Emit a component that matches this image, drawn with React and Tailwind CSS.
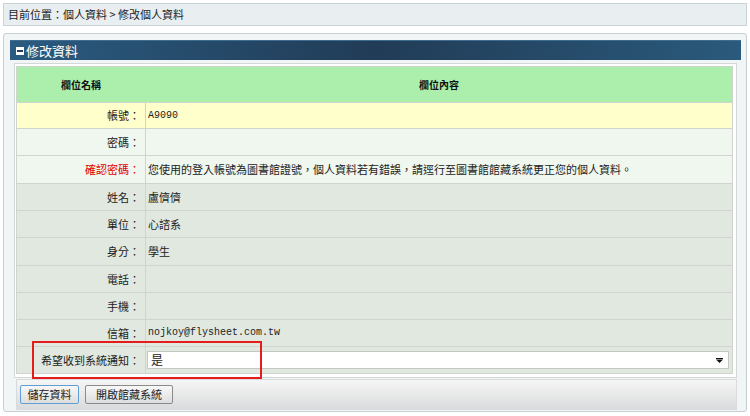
import React from "react";

const rows = [
  { label: "帳號：", value: "A9090", mono: true, h: "h-[26px]", bg: "bg-[#ffffcc]" },
  { label: "密碼：", value: "", h: "h-[27px]", bg: "bg-[#eff7ef]" },
  {
    label: "確認密碼：",
    value: "您使用的登入帳號為圖書館證號，個人資料若有錯誤，請逕行至圖書館館藏系統更正您的個人資料。",
    red: true,
    h: "h-[28px]",
    bg: "bg-[#eff7ef]",
  },
  { label: "姓名：", value: "盧儕儕", h: "h-[27px]", bg: "bg-[#e0e8e0]" },
  { label: "單位：", value: "心諮系", h: "h-[27px]", bg: "bg-[#e0e8e0]" },
  { label: "身分：", value: "學生", h: "h-[28px]", bg: "bg-[#e0e8e0]" },
  { label: "電話：", value: "", h: "h-[27px]", bg: "bg-[#e0e8e0]" },
  { label: "手機：", value: "", h: "h-[27px]", bg: "bg-[#e0e8e0]" },
  { label: "信箱：", value: "nojkoy@flysheet.com.tw", mono: true, h: "h-[27px]", bg: "bg-[#e0e8e0]" },
];

const cjk = "font-['Noto_Sans_CJK_TC','Noto_Sans',sans-serif]";

const App = () => {
  return (
    <div className={`w-[750px] h-[416px] bg-white relative overflow-hidden text-[#222] ${cjk}`}>

      {/* BREADCRUMB */}
      <div className="mx-[3px] mt-[3px] h-[23px] border border-[#c9d3d8] bg-[#e9eef1] flex items-center pl-[4px] text-[11px] leading-none">
        目前位置：個人資料 &gt; 修改個人資料
      </div>

      {/* PANEL */}
      <div className="ml-[3px] mr-[3px] mt-[7px] h-[379px] border border-[#c6cfd4] rounded-[3px] bg-[#f2f5f6] pl-[6px] pr-[5px] pt-[6px]">

        {/* TITLE BAR */}
        <div className="h-[20px] flex items-center pl-[6px] gap-[2px] bg-gradient-to-r from-[#2a5b80] via-[#213c57] to-[#2a5a7c] border-t border-[#3f6d90]">
          <svg width="8" height="8" viewBox="0 0 8 8">
            <rect x="0" y="0" width="8" height="8" fill="#ffffff" />
            <rect x="1" y="3" width="6" height="2" fill="#23415d" />
          </svg>
          <span className="text-white text-[13px] leading-none">修改資料</span>
        </div>

        {/* FORM BOX */}
        <div className="mt-[3px] mx-[4px] bg-white border border-[#d4d8d9] pl-[1px] pr-[3px] pt-[2px] pb-[3px]">
          <div className="border border-[#cfd4cf] text-[11px] leading-none">

            {/* HEADER ROW */}
            <div className="flex h-[36px] bg-[#acefac] border-b border-[#cfd4cf]">
              <div className="w-[129px] border-r border-[#cfd4cf] flex items-center justify-center font-bold text-[10px] text-[#111]">
                欄位名稱
              </div>
              <div className="flex-1 flex items-center justify-center font-bold text-[10px] text-[#111]">
                欄位內容
              </div>
            </div>

            {rows.map((row) => (
              <div key={row.label} className={`flex ${row.h} ${row.bg} border-b border-[#cfd4cf]`}>
                <div
                  className={`w-[129px] shrink-0 border-r border-[#cfd4cf] flex items-center justify-end pr-[5px] ${
                    row.red ? "text-[#e00000]" : ""
                  }`}
                >
                  {row.label}
                </div>
                <div
                  className={`flex-1 flex items-center pl-[2px] ${
                    row.mono ? "font-['Liberation_Mono',monospace] text-[10px]" : ""
                  }`}
                >
                  {row.value}
                </div>
              </div>
            ))}

            {/* NOTIFY ROW */}
            <div className="flex h-[26px] bg-[#e0e8e0]">
              <div className="w-[129px] shrink-0 border-r border-[#cfd4cf] flex items-center justify-end pr-[5px]">
                希望收到系統通知：
              </div>
              <div className="flex-1 flex items-center pl-[1px] pr-[3px]">
                <div className="w-full h-[18px] bg-white border border-[#c4c8c4] flex items-center justify-between pl-[3px] pr-[5px] text-[12px]">
                  <span>是</span>
                  <svg width="7" height="5" viewBox="0 0 7 5">
                    <rect x="0" y="0" width="7" height="1" fill="#111" />
                    <path d="M0 1.5 H7 L3.5 5 Z" fill="#111" />
                  </svg>
                </div>
              </div>
            </div>
          </div>
        </div>

        {/* BUTTON BAR */}
        <div className="mt-[1px] ml-[6px] mr-[4px] h-[31px] bg-gradient-to-b from-[#f6f6f6] to-[#d9dbdc] border border-[#d8dadb] flex items-center gap-[6px] pl-[3px]">
          <button className="w-[59px] h-[19px] rounded-[2px] border border-[#5f9fd6] bg-gradient-to-b from-[#f8f8f8] to-[#dedede] text-[11px] leading-none text-[#222]">
            儲存資料
          </button>
          <button className="w-[88px] h-[19px] rounded-[2px] border border-[#8a8a8a] bg-gradient-to-b from-[#f8f8f8] to-[#dedede] text-[11px] leading-none text-[#222]">
            開啟館藏系統
          </button>
        </div>
      </div>

      {/* HIGHLIGHT BOX */}
      <div className="absolute left-[32px] top-[341px] w-[230px] h-[38px] border-2 border-[#e41c1c]" />
    </div>
  );
};

export default App;
